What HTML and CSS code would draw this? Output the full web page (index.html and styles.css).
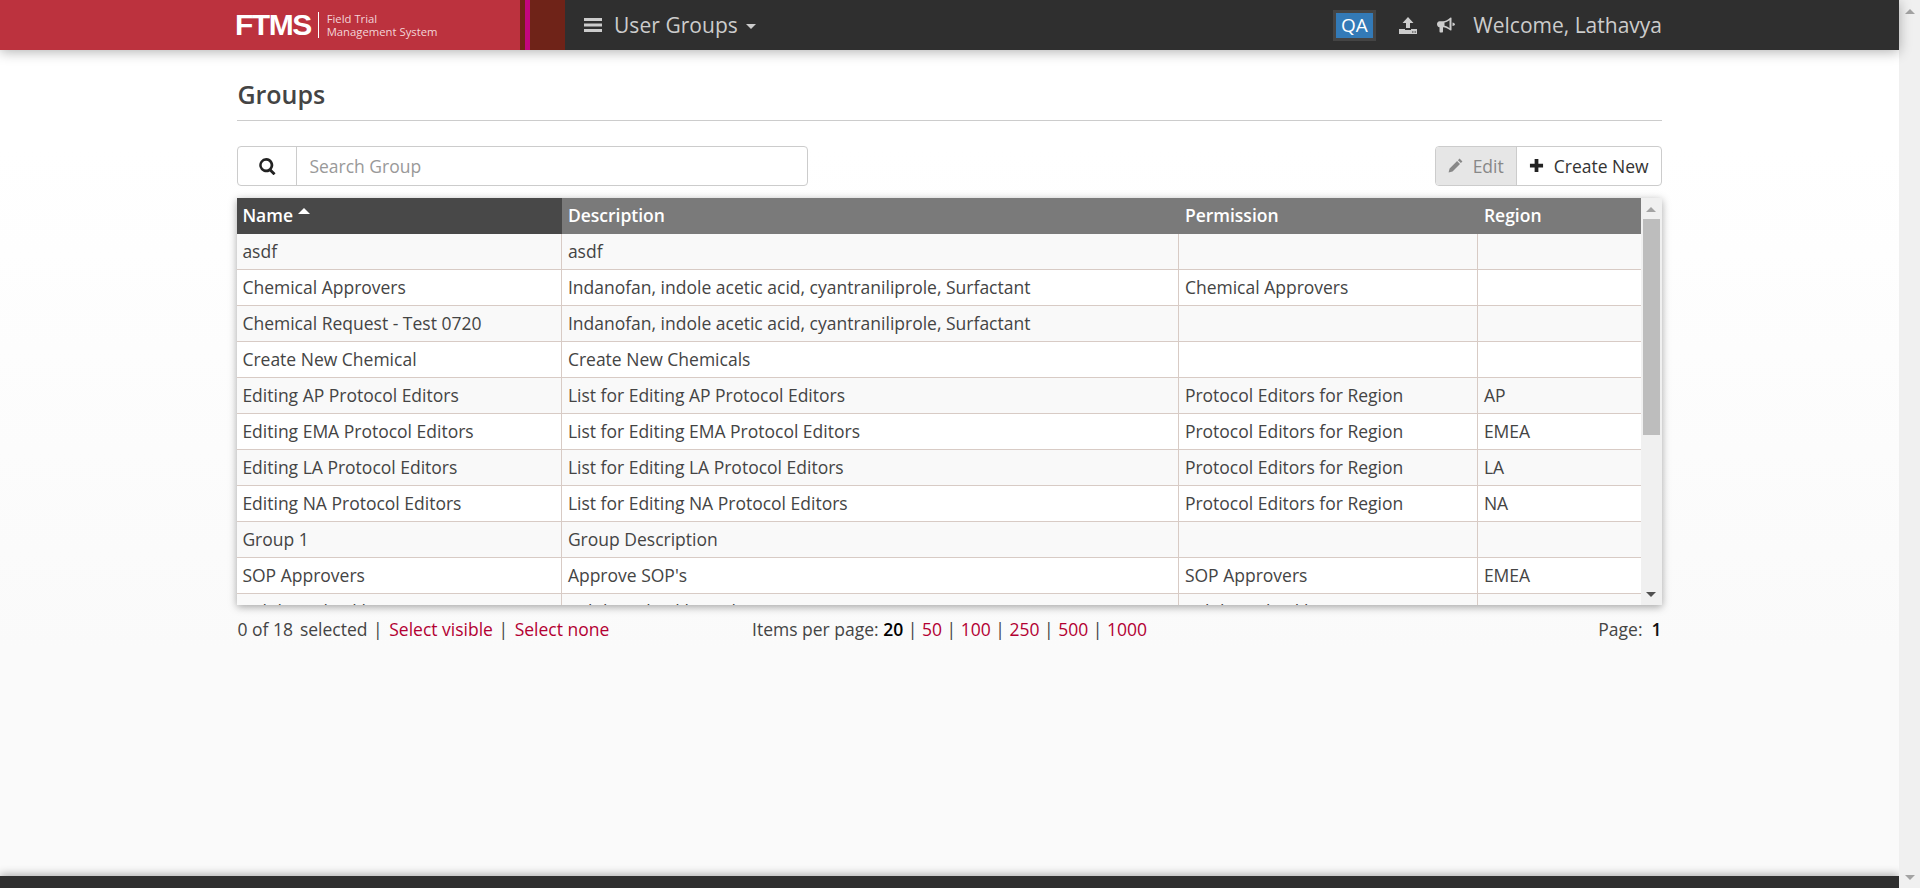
FILE: index.html
```html
<!DOCTYPE html>
<html>
<head>
<meta charset="utf-8">
<title>FTMS - User Groups</title>
<link rel="stylesheet" href="styles.css">
</head>
<body>
<div class="window">
  <div class="page">
    <header class="topbar">
      <div class="brand">
        <span class="brand-mark">FTMS</span>
        <span class="brand-name">Field Trial<br>Management System</span>
      </div>
      <div class="brand-edge"></div>
      <div class="brand-strip"></div>
      <div class="nav">
        <svg class="nav-menu" viewBox="0 0 18 14"><path d="M0 0h18v3H0zM0 5.500h18v3H0zM0 11h18v3H0z"/></svg>
        <span class="nav-title">User Groups</span>
        <span class="caret"></span>
      </div>
      <div class="nav-right">
        <span class="env"><span class="env-label">QA</span></span>
        <svg class="nav-icon" viewBox="0 0 18 18"><path d="M9 1l5.500 6H11v5H7V7H3.500zM0 13h6v1h6v-1h6v5H0zM13 15.500v1h1.500v-1zM15.500 15.500v1H17v-1z" fill-rule="evenodd"/></svg>
        <svg class="nav-icon nav-horn" viewBox="0 0 18 18"><path d="M13.500 1.500l1 .2v12.600l-1 .2C11 12.500 8.500 11.500 6 11.200V15.500c0 .5-.3 1-1 1H3.500c-.6 0-1-.5-1-1v-4.300C1 11 0 9.800 0 8.200s1-3 2.500-3H6c2.500 0 5-1.300 7.500-3.700zM12.500 4.200C11 5.400 9 6.300 7.500 6.600v3.200c1.500.3 3.500 1.200 5 2.400zM15.500 6.500c1.200.3 2.500.8 2.500 1.800s-1.300 1.500-2.500 1.800z" fill-rule="evenodd"/></svg>
        <span class="welcome">Welcome, Lathavya</span>
      </div>
    </header>

    <main class="content">
      <h3 class="page-title">Groups</h3>

      <div class="toolbar">
        <div class="search">
          <span class="search-icon">
            <svg viewBox="0 0 16 16"><path d="M6.700 0a6.700 6.700 0 0 1 5.300 10.800l3.600 3.600-1.900 1.900-3.600-3.700A6.700 6.700 0 1 1 6.700 0zm0 2.500a4.200 4.200 0 1 0 0 8.400 4.200 4.200 0 0 0 0-8.400z" fill-rule="evenodd"/></svg>
          </span>
          <span class="search-input">Search Group</span>
        </div>
        <div class="btn-group">
          <span class="btn btn-off">
            <svg viewBox="0 0 16 16"><path d="M12.300.6l3.100 3.100-1.700 1.700-3.100-3.100zM9.700 3.200l3.100 3.100-8 8-4.200 1.100 1.100-4.200z"/></svg>
            Edit
          </span>
          <span class="btn">
            <svg viewBox="0 0 16 16"><path d="M6 1h4v5h5v4h-5v5H6v-5H1V6h5z"/></svg>
            Create New
          </span>
        </div>
      </div>

      <div class="grid">
        <div class="grid-main">
          <div class="row head">
            <div class="cell sorted">Name <span class="sort-up"></span></div>
            <div class="cell">Description</div>
            <div class="cell">Permission</div>
            <div class="cell">Region</div>
          </div>
          <div class="grid-body">
            <div class="row"><div class="cell">asdf</div><div class="cell">asdf</div><div class="cell"></div><div class="cell"></div></div>
            <div class="row"><div class="cell">Chemical Approvers</div><div class="cell">Indanofan, indole acetic acid, cyantraniliprole, Surfactant</div><div class="cell">Chemical Approvers</div><div class="cell"></div></div>
            <div class="row"><div class="cell">Chemical Request - Test 0720</div><div class="cell">Indanofan, indole acetic acid, cyantraniliprole, Surfactant</div><div class="cell"></div><div class="cell"></div></div>
            <div class="row"><div class="cell">Create New Chemical</div><div class="cell">Create New Chemicals</div><div class="cell"></div><div class="cell"></div></div>
            <div class="row"><div class="cell">Editing AP Protocol Editors</div><div class="cell">List for Editing AP Protocol Editors</div><div class="cell">Protocol Editors for Region</div><div class="cell">AP</div></div>
            <div class="row"><div class="cell">Editing EMA Protocol Editors</div><div class="cell">List for Editing EMA Protocol Editors</div><div class="cell">Protocol Editors for Region</div><div class="cell">EMEA</div></div>
            <div class="row"><div class="cell">Editing LA Protocol Editors</div><div class="cell">List for Editing LA Protocol Editors</div><div class="cell">Protocol Editors for Region</div><div class="cell">LA</div></div>
            <div class="row"><div class="cell">Editing NA Protocol Editors</div><div class="cell">List for Editing NA Protocol Editors</div><div class="cell">Protocol Editors for Region</div><div class="cell">NA</div></div>
            <div class="row"><div class="cell">Group 1</div><div class="cell">Group Description</div><div class="cell"></div><div class="cell"></div></div>
            <div class="row"><div class="cell">SOP Approvers</div><div class="cell">Approve SOP's</div><div class="cell">SOP Approvers</div><div class="cell">EMEA</div></div>
            <div class="row"><div class="cell">Validate Checklist</div><div class="cell">Validate checklist submissions</div><div class="cell">Validate Checklist</div><div class="cell"></div></div>
          </div>
        </div>
        <div class="grid-scroll">
          <span class="arrow-up"></span>
          <span class="grid-thumb"></span>
          <span class="arrow-down"></span>
        </div>
      </div>

      <div class="pager">
        <div class="pager-left"><span class="count">0 of 18</span> selected <span class="sep">|</span> <a>Select visible</a> <span class="sep">|</span> <a>Select none</a></div>
        <div class="pager-mid">Items per page: <b>20</b> <span>|</span> <a>50</a> <span>|</span> <a>100</a> <span>|</span> <a>250</a> <span>|</span> <a>500</a> <span>|</span> <a>1000</a></div>
        <div class="pager-right">Page: &nbsp;<span class="page-num">1</span></div>
      </div>
    </main>

    <footer class="bottombar"></footer>
  </div>
  <div class="window-scroll">
    <span class="arrow-up"></span>
    <span class="arrow-down"></span>
  </div>
</div>
</body>
</html>
```

FILE: styles.css
```css
html, body {
   margin: 0;
   height: 100%;
   overflow: hidden;
}

body {
   font-family: "Open Sans", "DejaVu Sans", sans-serif;
   font-size: 17.500px;
   color: #444;
}

.window {
   display: flex;
   height: 100%;
}

.page {
   flex: 1;
   min-width: 0;
   display: flex;
   flex-direction: column;
   background: linear-gradient(#fff, #fff 150px, #fafafa 650px);
}

/* top bar */

.topbar {
   flex: none;
   height: 50px;
   display: flex;
   background: #2f2f2f;
   box-shadow: 0 2px 12px rgba(0, 0, 0, 0.3);
   position: relative;
   z-index: 2;
}

.brand {
   width: 520px;
   padding-left: 235px;
   box-sizing: border-box;
   display: flex;
   align-items: center;
   background: #bc323e;
   color: #fff;
}

.brand-mark {
   font-family: "Liberation Sans", sans-serif;
   font-size: 30px;
   font-weight: bold;
   letter-spacing: -1.500px;
   padding-right: 7px;
}

.brand-name {
   padding-left: 8px;
   border-left: 1px solid #fff;
   font-size: 11.300px;
   line-height: 13px;
   color: #f3d5d8;
}

.brand-edge {
   width: 5px;
   border-right: 5px solid #c2067f;
   background: #6f2318;
}

.brand-strip {
   width: 35px;
   background: #6f2318;
}

.nav {
   display: flex;
   align-items: center;
   padding-left: 19px;
   color: #ccc;
}

.nav-menu {
   width: 18px;
   height: 14px;
   fill: #ccc;
}

.nav-title {
   margin-left: 12px;
   font-size: 21px;
   letter-spacing: 0.05px;
}

.caret {
   margin-left: 8px;
   margin-top: 3px;
   border-top: 5px solid #ccc;
   border-left: 5px solid transparent;
   border-right: 5px solid transparent;
}

.nav-right {
   margin-left: auto;
   margin-right: 237px;
   display: flex;
   align-items: center;
   color: #ccc;
}

.env {
   padding: 3px;
   background: #444;
   color: #fff;
}

.env-label {
   display: block;
   padding: 0 5.500px;
   font-size: 19px;
   line-height: 25px;
   background: #337ab7;
}

.nav-icon {
   width: 18px;
   height: 18px;
   margin-left: 23px;
   fill: #ccc;
}

.nav-horn {
   margin-left: 20px;
}

.welcome {
   margin-left: 18px;
   font-size: 21px;
}

/* content */

.content {
   flex: 1;
   width: 75%;
   margin: 0 auto;
}

.page-title {
   margin: 0;
   padding: 26px 0 8px;
   line-height: 36px;
   border-bottom: 1px solid #ccc;
   font-size: 25px;
   font-weight: 600;
   color: #444;
}

.toolbar {
   margin-top: 25px;
   display: flex;
   justify-content: space-between;
}

.search {
   width: 571px;
   height: 40px;
   box-sizing: border-box;
   display: flex;
   border: 1px solid #ccc;
   border-radius: 4px;
   background: #fff;
}

.search-icon {
   width: 58px;
   border-right: 1px solid #ccc;
   display: flex;
   align-items: center;
   justify-content: center;
}

.search-icon svg {
   width: 17px;
   height: 17px;
   fill: #222;
}

.search-input {
   padding-left: 12px;
   line-height: 38px;
   color: #999;
}

.btn-group {
   display: flex;
   height: 40px;
   box-sizing: border-box;
   border: 1px solid #ccc;
   border-radius: 4px;
   background: #fff;
}

.btn {
   display: flex;
   align-items: center;
   padding: 0 12px 1px 12px;
   color: #333;
}

.btn svg {
   width: 15px;
   height: 15px;
   margin-right: 10px;
   fill: #222;
}

.btn-off {
   background: #e6e6e6;
   border-right: 1px solid #ccc;
   border-radius: 3px 0 0 3px;
   color: #888;
}

.btn-off svg {
   fill: #888;
}

/* table */

.grid {
   margin-top: 12px;
   height: 407px;
   display: flex;
   background: #fff;
   box-shadow: 0 2px 8px rgba(0, 0, 0, 0.35);
}

.grid-main {
   flex: 1;
   min-width: 0;
   display: flex;
   flex-direction: column;
}

.grid-body {
   flex: 1;
   overflow: hidden;
}

.row {
   height: 36px;
   box-sizing: border-box;
   display: grid;
   grid-template-columns: 325px 617px 299px 1fr;
   border-bottom: 1px solid #d8cbc5;
   background: #fff;
}

.grid-body .row:nth-child(odd) {
   background: #f9f9f9;
}

.cell {
   padding: 0 5px 0 5.500px;
   line-height: 35px;
   border-right: 1px solid #d8cbc5;
   white-space: nowrap;
   overflow: hidden;
}

.cell:first-child {
   padding-left: 5px;
}

.cell:last-child {
   border-right: 0;
}

.head {
   border-bottom: 0;
   background: #7a7a7a;
   color: #fff;
   font-weight: 600;
}

.head .cell {
   border-right: 0;
}

.head .sorted {
   background: #484848;
}

.sort-up {
   display: inline-block;
   vertical-align: 8px;
   border-bottom: 6px solid #fff;
   border-left: 6px solid transparent;
   border-right: 6px solid transparent;
}

/* fake scrollbars */

.grid-scroll, .window-scroll {
   flex: none;
   width: 21px;
   display: flex;
   flex-direction: column;
   align-items: center;
   background: #f0f0f0;
}

.arrow-up, .arrow-down {
   flex: none;
   border-left: 5px solid transparent;
   border-right: 5px solid transparent;
}

.arrow-up {
   margin-top: 9px;
   border-bottom: 5px solid #a3a3a3;
}

.arrow-down {
   margin-top: auto;
   margin-bottom: 8px;
   border-top: 5px solid #505050;
}

.window-scroll .arrow-down {
   border-top-color: #a3a3a3;
}

.grid-thumb {
   width: 17px;
   height: 216px;
   margin-top: 7px;
   background: #bdbdbd;
}

/* pager */

.pager {
   margin-top: 12px;
   display: grid;
   grid-template-columns: 1fr auto 1fr;
   line-height: 24px;
}

.pager a {
   color: #b30032;
}

.pager b {
   color: #000;
   font-weight: 600;
}

.count {
   margin-right: 2.500px;
}

.sep {
   margin: 0 2px 0 1px;
}

.pager-right {
   text-align: right;
}

.page-num {
   color: #111;
   font-weight: 600;
}

.bottombar {
   flex: none;
   height: 12px;
   background: #2f2f2f;
   box-shadow: 0 -2px 8px rgba(0, 0, 0, 0.3);
}
```
